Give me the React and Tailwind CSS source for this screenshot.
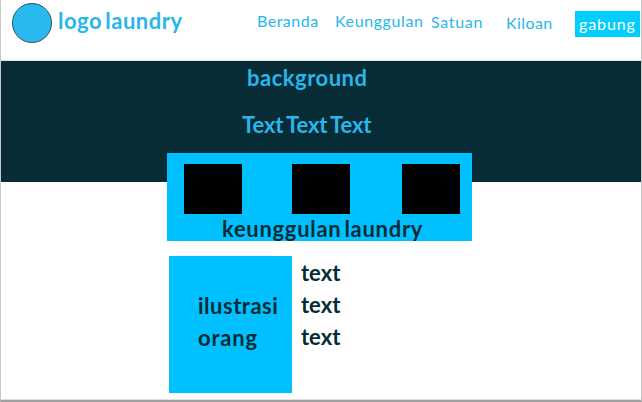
const features = ["ml-[17px] w-[58px]", "ml-[50px] w-[58px]", "ml-[52px] w-[58px]"];

function Header() {
  return (
    <header className="flex h-[61px] items-start border-b border-[#dfe4e5] text-[#29b6eb]">
      <div className="mt-[3px] ml-[11px] size-10 shrink-0 rounded-full border border-[#24546a] bg-[#29b9ee]" />
      <h1 className="mt-[9px] ml-[6px] w-[199px] shrink-0 text-[22px] leading-6 font-bold whitespace-nowrap tracking-[0.55px] [word-spacing:-3px]">
        logo laundry
      </h1>
      <nav className="flex items-start text-base leading-5 whitespace-nowrap">
        <a className="mt-[11px] w-[78px] tracking-[0.5px]">Beranda</a>
        <a className="mt-[11px] w-[96px] tracking-[0.6px]">Keunggulan</a>
        <a className="mt-3 w-[75px] tracking-[0.7px]">Satuan</a>
        <a className="mt-[13px] w-[69px] tracking-[0.4px]">Kiloan</a>
        <button className="mt-[11px] h-[26px] w-[65px] bg-[#00ceff] pl-1 text-left tracking-[0.9px] text-white">
          gabung
        </button>
      </nav>
    </header>
  );
}

export default function App() {
  return (
    <div className="h-[402px] w-[642px] overflow-hidden border-x border-b-2 border-x-[#c8c8c8] border-b-[#a0a0a0] bg-white font-['Lato',sans-serif]">
      <div className="h-[400px] border-b border-[#e0e0e0]">
        <Header />
        <section className="h-[121px] bg-[#072c36] text-[22px] leading-6 font-bold whitespace-nowrap text-[#29b6eb]">
          <p className="ml-[246px] pt-[5px] tracking-[0.5px]">background</p>
          <p className="mt-[23px] ml-[241px] tracking-[-0.1px] [word-spacing:-2px]">Text Text Text</p>
        </section>
        <section className="relative -mt-[29px] ml-[166px] h-[88px] w-[305px] bg-[#00c0ff]">
          <div className="flex pt-[11px]">
            {features.map((box) => (
              <div key={box} className={`h-[50px] shrink-0 bg-black ${box}`} />
            ))}
          </div>
          <h2 className="mt-[3px] ml-[55px] text-[22px] leading-6 font-bold whitespace-nowrap tracking-[0.7px] text-[#072c36] [word-spacing:-3px]">
            keunggulan laundry
          </h2>
        </section>
        <section className="mt-[15px] ml-[168px] flex text-[22px] leading-8 font-bold text-[#072c36]">
          <div className="h-[137px] w-[123px] bg-[#00c0ff] pt-[34px] pl-[29px]">
            <p className="tracking-[0.5px]">ilustrasi</p>
            <p className="tracking-[0.8px]">orang</p>
          </div>
          <div className="ml-[9px] pt-px">
            <p>text</p>
            <p>text</p>
            <p>text</p>
          </div>
        </section>
      </div>
    </div>
  );
}
